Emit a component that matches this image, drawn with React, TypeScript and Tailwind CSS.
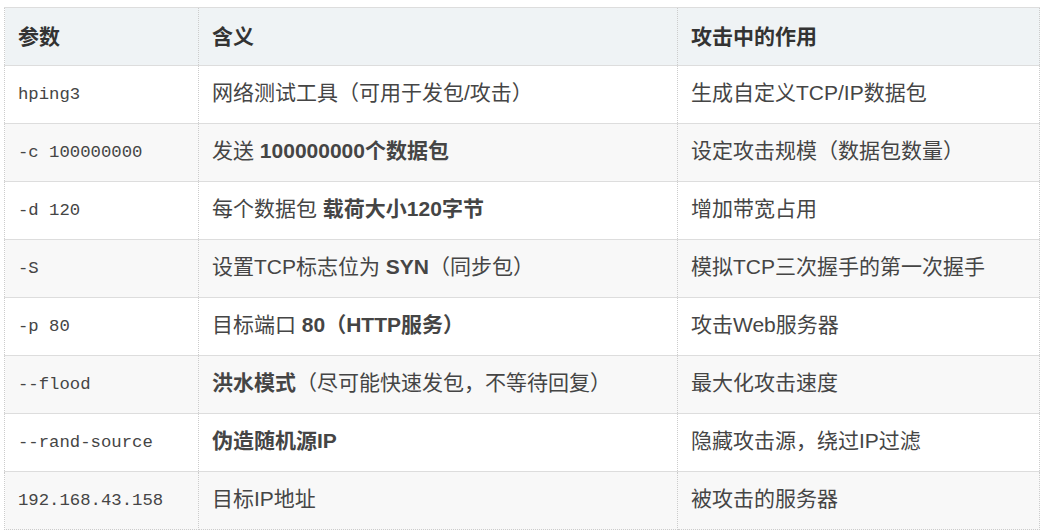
import React from 'react';

type Row = {
  param: string;
  meaning: React.ReactNode;
  effect: string;
};

const rows: Row[] = [
  { param: 'hping3', meaning: '网络测试工具（可用于发包/攻击）', effect: '生成自定义TCP/IP数据包' },
  {
    param: '-c 100000000',
    meaning: (
      <>
        发送 <b className="font-bold">100000000个数据包</b>
      </>
    ),
    effect: '设定攻击规模（数据包数量）',
  },
  {
    param: '-d 120',
    meaning: (
      <>
        每个数据包 <b className="font-bold">载荷大小120字节</b>
      </>
    ),
    effect: '增加带宽占用',
  },
  {
    param: '-S',
    meaning: (
      <>
        设置TCP标志位为 <b className="font-bold">SYN</b>（同步包）
      </>
    ),
    effect: '模拟TCP三次握手的第一次握手',
  },
  {
    param: '-p 80',
    meaning: (
      <>
        目标端口 <b className="font-bold">80（HTTP服务）</b>
      </>
    ),
    effect: '攻击Web服务器',
  },
  {
    param: '--flood',
    meaning: (
      <>
        <b className="font-bold">洪水模式</b>（尽可能快速发包，不等待回复）
      </>
    ),
    effect: '最大化攻击速度',
  },
  {
    param: '--rand-source',
    meaning: <b className="font-bold">伪造随机源IP</b>,
    effect: '隐藏攻击源，绕过IP过滤',
  },
  { param: '192.168.43.158', meaning: '目标IP地址', effect: '被攻击的服务器' },
];

const sans = "font-['Liberation_Sans','Noto_Sans_CJK_SC',sans-serif]";

export default function App() {
  return (
    <div className="w-[1052px] h-[532px] bg-white pt-[7px] pl-[4px]">
      <table className={`border-collapse table-fixed w-[1035px] text-[21px] text-[#454545] ${sans}`}>
        <colgroup>
          <col className="w-[194px]" />
          <col className="w-[479px]" />
          <col className="w-[362px]" />
        </colgroup>
        <thead>
          <tr className="h-[58px] bg-[#eff3f5] border-t border-b border-[#dddddd]">
            <th className="border-x border-dotted border-[#cccccc] pl-[13px] text-left font-bold text-[#333333]">参数</th>
            <th className="border-x border-dotted border-[#cccccc] pl-[13px] text-left font-bold text-[#333333]">含义</th>
            <th className="border-x border-dotted border-[#cccccc] pl-[13px] text-left font-bold text-[#333333]">攻击中的作用</th>
          </tr>
        </thead>
        <tbody>
          {rows.map((row, i) => {
            const last = i === rows.length - 1;
            const cell = `border-x border-dotted border-[#cccccc] pl-[13px] text-left ${last ? 'border-b' : ''}`;
            return (
              <tr
                key={row.param}
                className={`h-[58px] ${i % 2 === 1 ? 'bg-[#f8f8f8]' : 'bg-white'} ${last ? '' : 'border-b border-[#dddddd]'}`}
              >
                <td className={`${cell} font-['Liberation_Mono',monospace] text-[17.3px]`}>{row.param}</td>
                <td className={`${cell} pb-[3px]`}>{row.meaning}</td>
                <td className={`${cell} pb-[3px]`}>{row.effect}</td>
              </tr>
            );
          })}
        </tbody>
      </table>
    </div>
  );
}
